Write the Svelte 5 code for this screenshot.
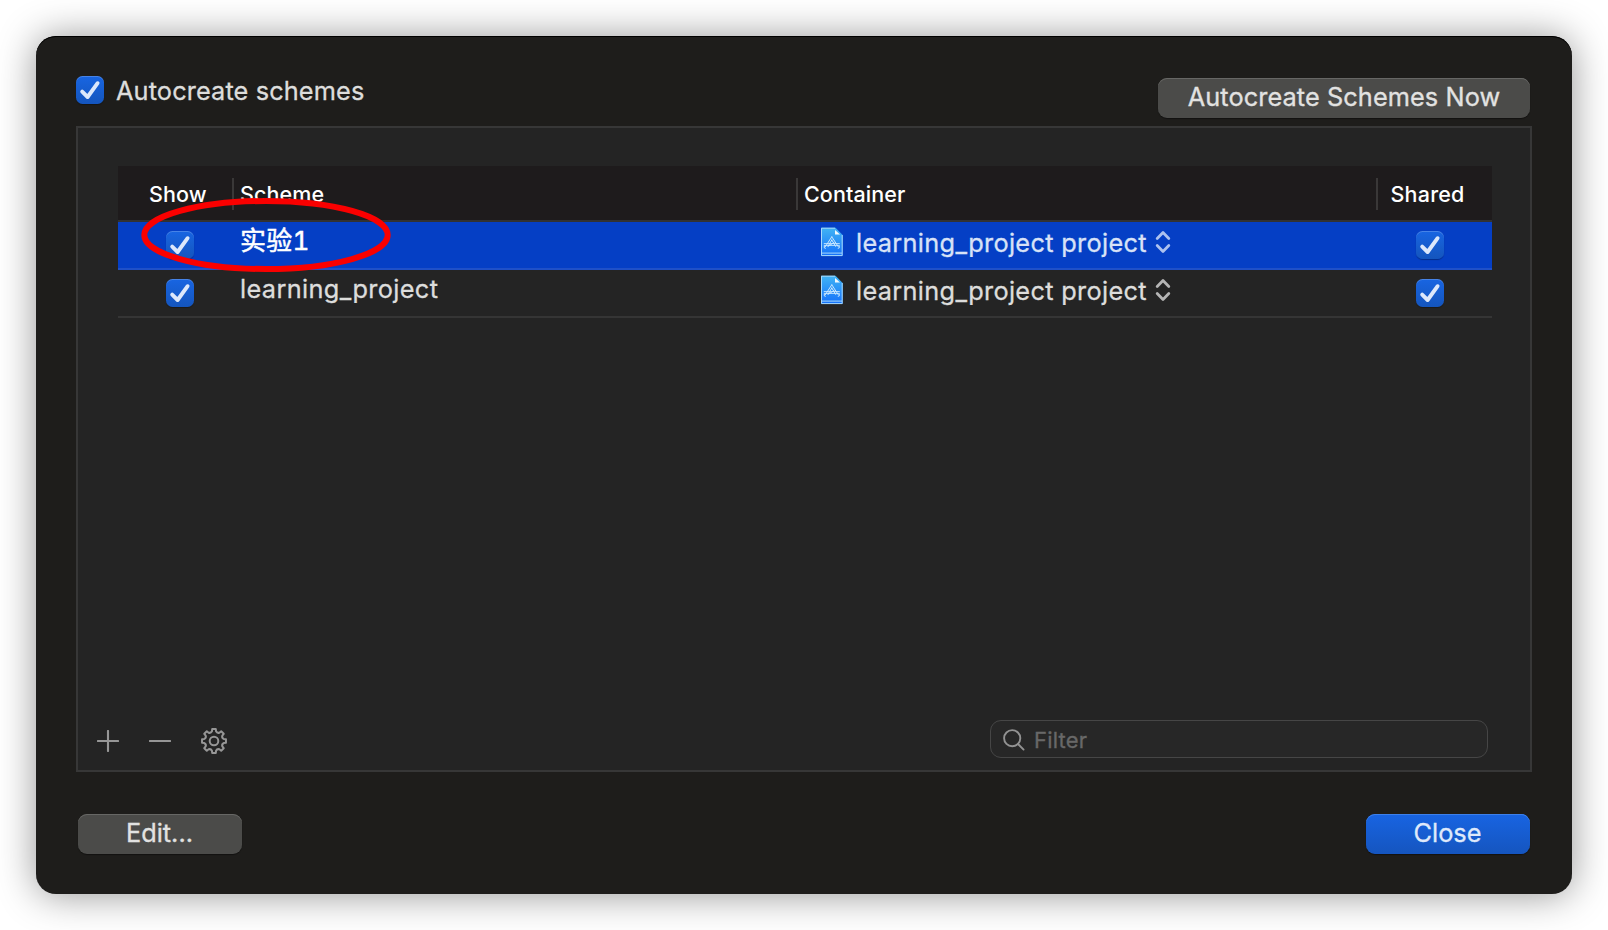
<script>
  const schemes = [
    { name: '实验1', container: 'learning_project project', selected: true },
    { name: 'learning_project', container: 'learning_project project', selected: false }
  ];

  // Outline of an eight-toothed cog centred on the origin.
  function cogPath(teeth, outer, inner) {
    const step = (Math.PI * 2) / teeth;
    const at = (r, a) => `${(r * Math.sin(a)).toFixed(2)} ${(-r * Math.cos(a)).toFixed(2)}`;
    let d = '';
    for (let i = 0; i < teeth; i++) {
      const a = i * step;
      d += `${i ? 'L' : 'M'}${at(outer, a - 0.15)} L${at(outer, a + 0.15)} L${at(inner + 0.5, a + 0.21)} `;
      d += `Q${at(inner - 1.2, a + step / 2)} ${at(inner + 0.5, a + step - 0.21)} `;
    }
    return d + 'Z';
  }
  const cog = cogPath(8, 12.1, 9.4);
</script>

{#snippet checkbox()}
  <span class="checkbox">
    <svg width="28" height="28" viewBox="0 0 28 28">
      <path d="M6.2 15.6 L11.6 21 L21.6 7.2" />
    </svg>
  </span>
{/snippet}

<main class="stage">
  <section class="dialog">
    <header class="top">
      <label class="auto">{@render checkbox()}<span class="auto-text">Autocreate schemes</span></label>
      <button class="btn now"><span>Autocreate Schemes Now</span></button>
    </header>

    <div class="panel">
      <div class="table">
        <div class="row head">
          <div class="cell show">Show</div>
          <div class="cell">Scheme</div>
          <div class="cell">Container</div>
          <div class="cell shared">Shared</div>
        </div>
        {#each schemes as s}
          <div class="row item" class:selected={s.selected}>
            <div class="check-cell first">{@render checkbox()}</div>
            <div class="name" class:cjk={s.selected}>{s.name}</div>
            <div class="container">
              <svg class="doc" width="24" height="30" viewBox="0 0 24 30">
                <defs>
                  <linearGradient id="docfill" x1="0" y1="0" x2="0" y2="1">
                    <stop offset="0" stop-color="#41b4f4" />
                    <stop offset="1" stop-color="#1470fa" />
                  </linearGradient>
                </defs>
                <path d="M1 .7 H15.5 L22.7 8 V29 H1 Z" fill="url(#docfill)" />
                <path d="M1.5 1.2 H15 M22.2 8 V28.6 H1.5 V1.2 M2 26.1 H22" fill="none" stroke="#a9d9fa" stroke-width="1" />
                <path d="M15 3 L20 7.6 H15 Z" fill="#f4f9fd" />
                <g fill="none" stroke="#c9e8ff" stroke-linecap="round" stroke-linejoin="round">
                  <path d="M11.8 9.8 L5.4 19.6 M11.8 9.8 L18.2 19.6 M11.8 13 L8 19.4 M11.8 13 L15.6 19.4" stroke-width="1" />
                  <path d="M4.2 16.6 H19.4 M4.2 18.4 H19.4" stroke-width=".9" />
                  <path d="M4.2 19.4 Q3.6 21.6 5.4 21.4 M19.4 19.4 Q20 21.6 18.2 21.4 M8.5 19 L14 15.6" stroke-width="1" />
                </g>
              </svg>
              <span class="project">{s.container}</span>
              <svg class="updown" width="16" height="24" viewBox="0 0 16 24">
                <path d="M2.2 8.4 L8 2.6 L13.8 8.4 M2.2 15.6 L8 21.4 L13.8 15.6" />
              </svg>
            </div>
            <div class="check-cell last">{@render checkbox()}</div>
          </div>
        {/each}
      </div>

      <footer class="tools">
        <div class="actions">
          <svg width="22" height="22" viewBox="0 0 22 22"><path d="M11 .9 V21.1 M.9 11 H21.1" /></svg>
          <svg width="22" height="22" viewBox="0 0 22 22"><path d="M.9 11 H21.1" /></svg>
          <svg class="gear" width="28" height="28" viewBox="-14 -14 28 28">
            <path d={cog} />
            <circle r="4.3" />
          </svg>
        </div>
        <div class="filter">
          <svg width="24" height="24" viewBox="0 0 24 24">
            <circle cx="10.2" cy="10.2" r="8.1" />
            <path d="M16 16 L21.6 21.6" />
          </svg>
          <span>Filter</span>
        </div>
      </footer>
    </div>

    <div class="bottom">
      <button class="btn"><span>Edit...</span></button>
      <button class="btn primary"><span>Close</span></button>
    </div>
  </section>

  <svg class="highlight" width="252" height="76" viewBox="0 0 252 76">
    <ellipse cx="126" cy="38" rx="121.7" ry="34" />
  </svg>
</main>

<style>
  :global(body) { margin: 0; background: #fff; }
  .stage {
    position: relative;
    box-sizing: border-box;
    width: 1608px;
    height: 930px;
    padding: 36px;
    overflow: hidden;
    font-family: Inter, "Noto Sans CJK SC", sans-serif;
    font-size: 25.3px;
    color: #dddddc;
    -webkit-text-stroke: .3px currentColor;
  }
  .dialog {
    box-sizing: border-box;
    width: 1536px;
    height: 858px;
    padding: 40px 40px 0;
    border-radius: 20px;
    background: #1e1d1b;
    box-shadow: 0 1px 38px rgba(0, 0, 0, .42), inset 0 1px 0 #000;
  }
  .top { display: flex; justify-content: space-between; height: 50px; }
  .auto { display: flex; height: 28px; }
  .auto-text { margin-left: 12px; line-height: 30px; letter-spacing: .13px; white-space: nowrap; }
  .checkbox {
    display: block;
    width: 28px;
    height: 28px;
    border-radius: 6.5px;
    background: linear-gradient(#1865e2, #1455bd);
    box-shadow: inset 0 1px 0 rgba(255, 255, 255, .2), 0 1px 1px rgba(0, 0, 0, .3);
  }
  .checkbox svg { display: block; }
  .checkbox path { fill: none; stroke: #dce8fb; stroke-width: 3.9; stroke-linecap: round; stroke-linejoin: round; }
  .btn {
    width: 164px;
    height: 40px;
    padding: 0 1px 2px 0;
    border: 0;
    border-radius: 9px;
    background: #4b4b49;
    box-shadow: inset 0 1px 0 #676765, 0 1px 1px rgba(0, 0, 0, .4);
    font: inherit;
    line-height: 38px;
    color: #e2e2e1;
    white-space: nowrap;
  }
  .now { width: 372px; margin: 2px 2px 0 0; padding-right: 0; letter-spacing: .09px; }
  .primary {
    background: linear-gradient(#1864e2, #1555bf);
    box-shadow: inset 0 1px 0 #3d80ea, 0 1px 1px rgba(0, 0, 0, .4);
    color: #dfe9fb;
  }
  .panel {
    display: flex;
    flex-direction: column;
    justify-content: space-between;
    box-sizing: border-box;
    height: 646px;
    padding: 38px 38px 0 40px;
    border: 2px solid #373737;
    background: #242424;
  }
  .row { display: grid; grid-template-columns: 114px 564px 580px 116px; box-sizing: border-box; width: 1374px; }
  .head { height: 56px; padding-top: 12px; border-bottom: 2px solid #323232; background: #1e1b1c; color: #fff; font-size: 21.5px; font-weight: 500; -webkit-text-stroke-width: 0; }
  .cell { box-sizing: border-box; height: 32px; padding-left: 6px; border-left: 2px solid #3a3838; line-height: 33px; letter-spacing: .1px; }
  .cell.show { padding-left: 31px; border: 0; }
  .cell.shared { padding-left: 12.5px; letter-spacing: .2px; }
  .item { height: 48px; border-bottom: 2px solid #353535; }
  .selected { background: #053fc5; border-color: #1f50c8; }
  .check-cell { padding-top: 9px; }
  .first { padding-left: 48px; }
  .last { padding-left: 40px; }
  .name { padding-left: 8px; line-height: 38px; letter-spacing: .36px; }
  .cjk { color: #fff; font-size: 26px; letter-spacing: .3px; font-variant-numeric: tabular-nums; -webkit-text-stroke-width: .5px; }
  .container { display: flex; padding-left: 24px; }
  .doc { margin-top: 5px; }
  .project { margin-left: 12px; line-height: 42px; letter-spacing: .33px; width: 292px; white-space: nowrap; }
  .selected .project { color: #d8e2f7; }
  .updown { margin: 8px 0 0 7px; fill: none; stroke: #b5b5b5; stroke-width: 2.8; stroke-linecap: round; stroke-linejoin: round; }
  .selected .updown { stroke: #adc2ef; }
  .tools { display: flex; justify-content: space-between; height: 50px; margin-right: 4px; }
  .actions { display: flex; gap: 30px; margin: 10px 0 0 -21px; fill: none; stroke: #969696; stroke-width: 2.1; stroke-linecap: round; }
  .gear { margin: -3px 0 0 -1px; stroke-width: 2; stroke-linejoin: round; }
  .filter {
    display: flex;
    box-sizing: border-box;
    width: 498px;
    height: 38px;
    padding: 7px 0 0 11px;
    border: 1px solid #464646;
    border-radius: 11px;
    background: #272727;
    color: #686868;
    font-size: 22px;
    line-height: 24px;
    letter-spacing: .2px;
  }
  .filter svg { margin-right: 8px; fill: none; stroke: #929292; stroke-width: 1.9; stroke-linecap: round; }
  .bottom { display: flex; justify-content: space-between; padding: 42px 2px 0; }
  .highlight { position: absolute; left: 140px; top: 197px; fill: none; stroke: #fa0000; stroke-width: 6; }
</style>
